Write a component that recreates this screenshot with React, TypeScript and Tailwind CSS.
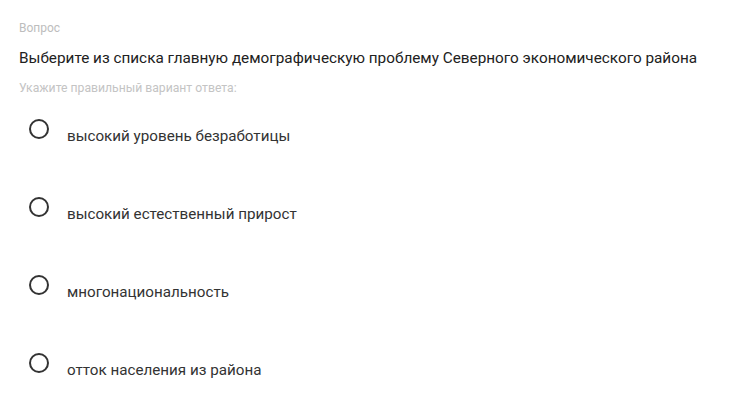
const options = [
  "высокий уровень безработицы",
  "высокий естественный прирост",
  "многонациональность",
  "отток населения из района",
];

export default function App() {
  return (
    <div className="w-[731px] h-[410px] bg-white font-['Roboto',sans-serif] px-[19px] pt-[20px]">
      <p className="text-[12px] leading-[16px] text-[#bdbdbd]">Вопрос</p>
      <h1 className="mt-[12px] text-[15.3px] leading-[20px] text-[#212121]">
        Выберите из списка главную демографическую проблему Северного экономического района
      </h1>
      <p className="mt-[12px] text-[12.2px] leading-[16px] text-[#c4c4c4]">
        Укажите правильный вариант ответа:
      </p>
      <div className="mt-[23px] flex flex-col gap-[51px]">
        {options.map((o) => (
          <label key={o} className="flex items-start gap-[18px] pl-[10px]">
            <span className="block size-[20px] shrink-0 rounded-full border-2 border-[#333]" />
            <span className="mt-[7px] text-[15.2px] leading-[20px] text-[#333]">{o}</span>
          </label>
        ))}
      </div>
    </div>
  );
}
